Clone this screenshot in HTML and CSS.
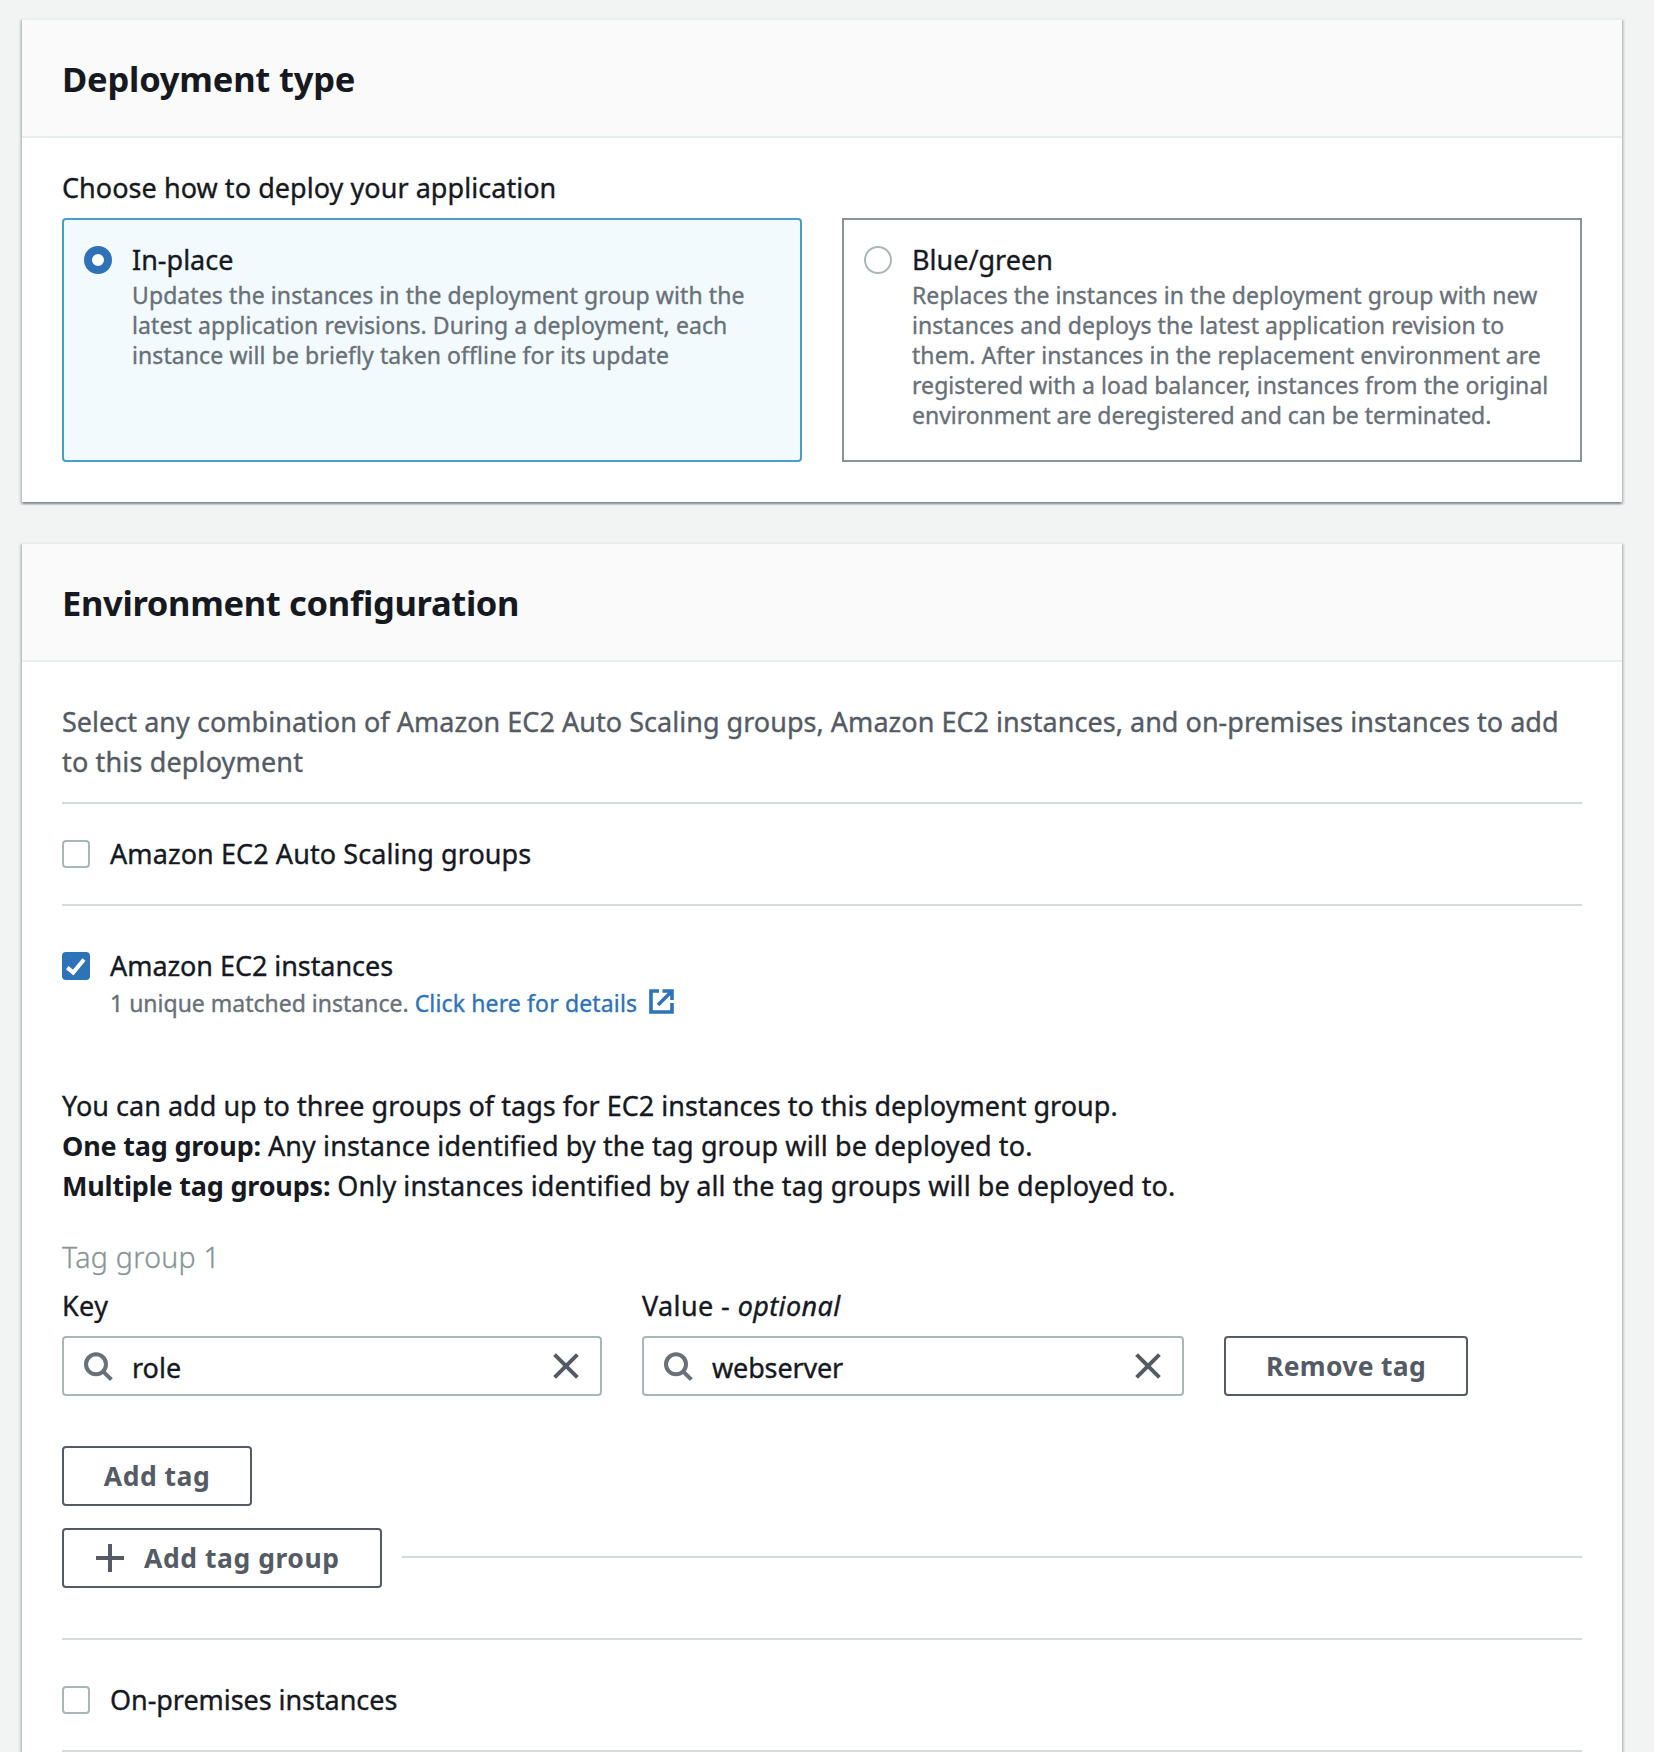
FILE: index.html
```html
<!DOCTYPE html>
<html lang="en">
<head>
<meta charset="utf-8">
<title>Create deployment group</title>
<link rel="stylesheet" href="styles.css">
</head>
<body>
<main class="page">
  <section class="card">
    <header class="card-header"><h2>Deployment type</h2></header>
    <div class="card-body type-body">
      <div class="label">Choose how to deploy your application</div>
      <div class="tiles">
        <label class="tile tile-selected">
          <span class="radio radio-on"></span>
          <span class="tile-text">
            <span class="tile-title">In-place</span>
            <span class="tile-desc desc-wide">Updates the instances in the deployment group with the<br>latest application revisions. During a deployment, each<br>instance will be briefly taken offline for its update</span>
          </span>
        </label>
        <label class="tile">
          <span class="radio"></span>
          <span class="tile-text">
            <span class="tile-title">Blue/green</span>
            <span class="tile-desc">Replaces the instances in the deployment group with new<br>instances and deploys the latest application revision to<br>them. After instances in the replacement environment are<br>registered with a load balancer, instances from the original<br><span class="desc-tight">environment are deregistered and can be terminated.</span></span>
          </span>
        </label>
      </div>
    </div>
  </section>

  <section class="card">
    <header class="card-header"><h2 class="title-tight">Environment configuration</h2></header>
    <div class="card-body env-body">
      <p class="intro">Select any combination of Amazon EC2 Auto Scaling groups, Amazon EC2 instances, and on-premises instances to add<br><span class="loose">to this deployment</span></p>
      <hr class="rule">
      <label class="check-row check-first"><span class="checkbox"></span><span class="check-label">Amazon EC2 Auto Scaling groups</span></label>
      <hr class="rule">
      <label class="check-row check-main">
        <span class="checkbox checkbox-on">
          <svg viewBox="0 0 28 28" width="28" height="28"><path d="M5.3 15.6 11.2 20.6 22 7.4" fill="none" stroke="#fff" stroke-width="4"/></svg>
        </span>
        <span class="check-label label-tight">Amazon EC2 instances</span>
      </label>
      <div class="matched">
        <span>1 unique matched instance.</span>
        <a class="link" href="#">Click here for details</a>
        <svg class="external" viewBox="0 0 25 25" width="25" height="25" fill="none" stroke="currentColor" stroke-width="3.6"><path d="M10 2H2V23H23V14"/><path d="M9 16 22 3"/><path d="M13.5 2H23V11"/></svg>
      </div>
      <p class="notes">You can add up to three groups of tags for EC2 instances to this deployment group.<br><b>One tag group:</b> <span class="note-text">Any instance identified by the tag group will be deployed to.</span><br><b>Multiple tag groups:</b> <span class="note-text">Only instances identified by all the tag groups will be deployed to.</span></p>
      <h3 class="group-title">Tag group 1</h3>
      <div class="tag-row">
        <div class="field field-key">
          <div class="label">Key</div>
          <div class="input">
            <svg class="search" viewBox="0 0 32 32" width="32" height="32"><circle cx="14" cy="14.3" r="10"/><path d="M21 21.3 29.4 29.7"/></svg>
            <span class="value">role</span>
            <svg class="clear" viewBox="0 0 32 32" width="32" height="32"><path d="M4.6 4.6 27.4 27.4M27.4 4.6 4.6 27.4"/></svg>
          </div>
        </div>
        <div class="field field-value">
          <div class="label">Value - <i>optional</i></div>
          <div class="input">
            <svg class="search" viewBox="0 0 32 32" width="32" height="32"><circle cx="14" cy="14.3" r="10"/><path d="M21 21.3 29.4 29.7"/></svg>
            <span class="value value-tight">webserver</span>
            <svg class="clear" viewBox="0 0 32 32" width="32" height="32"><path d="M4.6 4.6 27.4 27.4M27.4 4.6 4.6 27.4"/></svg>
          </div>
        </div>
        <button class="button button-remove">Remove tag</button>
      </div>
      <button class="button button-add">Add tag</button>
      <div class="group-row">
        <button class="button button-group">
          <svg viewBox="0 0 32 32" width="32" height="32"><path d="M16 2V30M2 16H30" fill="none" stroke="currentColor" stroke-width="4"/></svg>
          <span>Add tag group</span>
        </button>
        <hr class="rule rule-inline">
      </div>
      <hr class="rule rule-section">
      <label class="check-row check-main check-last"><span class="checkbox"></span><span class="check-label label-tight">On-premises instances</span></label>
      <hr class="rule">
    </div>
  </section>
</main>
</body>
</html>
```
FILE: styles.css
```css
* { box-sizing: border-box; }

html { overflow: hidden; }

body {
  margin: 0;
  height: 1752px;
  overflow: hidden;
  background: #f2f3f3;
  color: #16191f;
  font: 27px/40px "Noto Sans", "Open Sans", sans-serif;
  -webkit-text-stroke: .35px currentColor;
}

h2, h3, p { margin: 0; }

h2, h3, b, .button { -webkit-text-stroke: 0; }

.page {
  display: flex;
  flex-direction: column;
  gap: 40px;
  width: 1600px;
  margin-left: 22px;
  padding-top: 18px;
}

.card {
  background: #fff;
  border-top: 2px solid #eaeded;
  box-shadow: 0 2px 2px rgba(0, 28, 36, .3), 2px 2px 2px rgba(0, 28, 36, .15), -2px 2px 2px rgba(0, 28, 36, .15);
}

.card-header {
  height: 118px;
  padding: 35px 40px 0;
  background: #fafafa;
  border-bottom: 2px solid #eaeded;
}

.card-header h2 {
  font-size: 34.5px;
  line-height: 48px;
  font-weight: 700;
  letter-spacing: -.2px;
}

.card-header .title-tight { letter-spacing: -.33px; }

.type-body { padding: 30px 40px 40px; }
.env-body { padding: 40px 40px 60px; }

.label {
  margin-bottom: 10px;
  letter-spacing: .05px;
  white-space: nowrap;
}

.tiles {
  display: grid;
  grid-template-columns: 1fr 1fr;
  gap: 40px;
}

.tile {
  display: flex;
  gap: 20px;
  height: 244px;
  padding: 22px 20px 0;
  border: 2px solid #879596;
}

.tile-selected {
  background: #f2fafd;
  border-color: #45a0c6;
  border-radius: 4px;
}

.radio {
  flex: none;
  width: 28px;
  height: 28px;
  margin-top: 4px;
  border: 2px solid #aab7b8;
  border-radius: 50%;
  background: #fff;
}

.radio-on { border: 8px solid #2e72b8; }

.tile-text { display: flex; flex-direction: column; gap: 3px; padding-top: 1px; }
.tile-title { line-height: 34px; letter-spacing: 0; }

.tile-desc {
  color: #687078;
  font-size: 23px;
  line-height: 30px;
  letter-spacing: .06px;
  white-space: nowrap;
}

.desc-wide { letter-spacing: .09px; }
.desc-tight { letter-spacing: -.03px; }

.intro {
  margin-bottom: 20px;
  color: #545b64;
  letter-spacing: .03px;
  white-space: nowrap;
}

.loose { letter-spacing: .15px; }

.rule {
  height: 2px;
  margin: 0;
  border: 0;
  background: #d5dbdb;
}

.check-row { display: flex; align-items: center; gap: 20px; }
.check-first { padding: 30px 0; }
.check-main { padding-top: 40px; }
.check-last { padding-bottom: 30px; }
.check-label { letter-spacing: .08px; }
.label-tight { letter-spacing: -.06px; }

.checkbox {
  display: flex;
  flex: none;
  width: 28px;
  height: 28px;
  border: 2px solid #aab7b8;
  border-radius: 4px;
}

.checkbox-on { border: 0; background: #2e72b8; }

.matched {
  display: flex;
  align-items: center;
  gap: 6px;
  height: 36px;
  padding-left: 48px;
  color: #687078;
  font-size: 23px;
  line-height: 34px;
  padding-bottom: 2px;
}

.link { color: #2e72b8; text-decoration: none; letter-spacing: .14px; }
.external { margin: 0 0 3px 6px; color: #2e72b8; }

.notes { margin-top: 64px; letter-spacing: .02px; white-space: nowrap; }
.notes b { letter-spacing: -.2px; }
.note-text { letter-spacing: .1px; }

.group-title {
  margin-top: 31px;
  color: #879596;
  font-size: 28.5px;
  font-weight: 300;
  letter-spacing: .3px;
  -webkit-text-stroke: .3px currentColor;
}

.tag-row {
  display: flex;
  align-items: flex-end;
  gap: 40px;
  margin-top: 9px;
}

.field-key { width: 540px; }
.field-value { width: 542px; }
.field i { letter-spacing: .4px; }
.field .label { letter-spacing: .4px; }

.input {
  display: flex;
  align-items: center;
  height: 60px;
  padding: 0 18px;
  border: 2px solid #aab7b8;
  border-radius: 4px;
}

.search, .clear { flex: none; fill: none; stroke-width: 4; }
.search { stroke: #687078; }
.clear { stroke: #545b64; }
.value { flex: 1; padding: 4px 0 0 18px; }
.value-tight { letter-spacing: -.15px; }

.button {
  display: flex;
  align-items: center;
  justify-content: center;
  height: 60px;
  padding: 0;
  border: 2px solid #545b64;
  border-radius: 4px;
  background: #fff;
  color: #545b64;
  font: 700 26.5px/40px "Noto Sans", "Open Sans", sans-serif;
  letter-spacing: .5px;
}

.button-remove { width: 244px; letter-spacing: .3px; }
.button-add { width: 190px; margin-top: 50px; }
.button-group { width: 320px; gap: 18px; justify-content: flex-start; padding-left: 30px; letter-spacing: .55px; }

.group-row {
  display: flex;
  align-items: center;
  gap: 20px;
  margin-top: 22px;
}

.rule-inline { flex: 1; position: relative; top: -1px; }
.rule-section { margin-top: 50px; }
```
